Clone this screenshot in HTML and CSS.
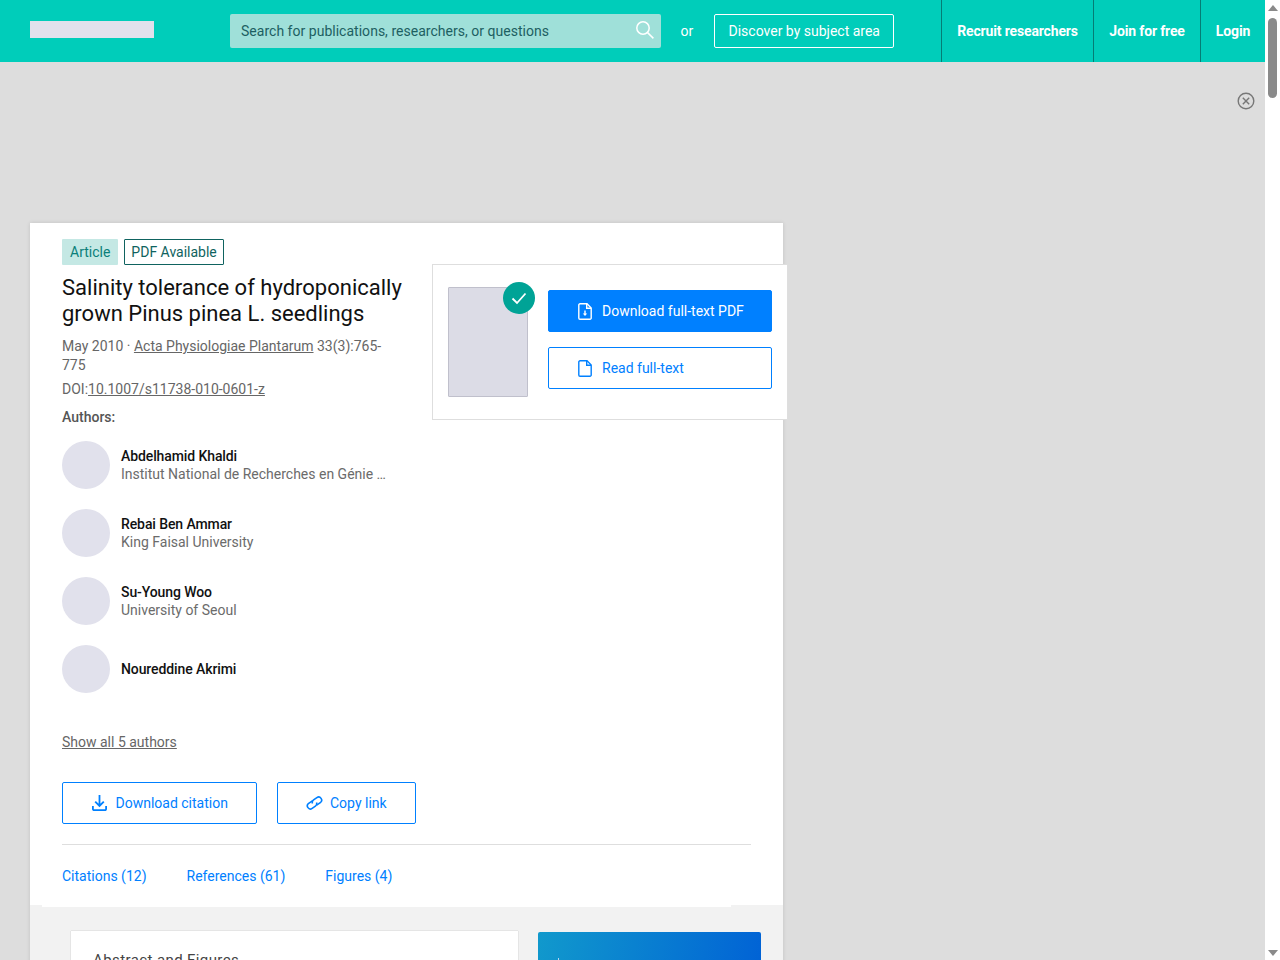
FILE: index.html
```html
<!DOCTYPE html>
<html lang="en">
<head>
  <meta charset="UTF-8" />
  <title>Salinity tolerance of hydroponically grown Pinus pinea L. seedlings</title>
  <link rel="stylesheet" href="styles.css">
</head>
<body>
  <div class="page">
    <header class="topbar">
      <div class="logo"></div>
      <div class="search">
        <span>Search for publications, researchers, or questions</span>
        <svg class="search-icon" width="20" height="20" viewBox="0 0 20 20" fill="none" stroke="#fff" stroke-width="1.5"><circle cx="8" cy="8" r="6.2"/><path d="M12.6 12.6 18.4 18.4"/></svg>
      </div>
      <span class="or">or</span>
      <a class="discover">Discover by subject area</a>
      <nav class="topnav">
        <a class="nav-recruit">Recruit researchers</a>
        <a class="nav-join">Join for free</a>
        <a class="nav-login">Login</a>
      </nav>
    </header>

    <div class="ad">
      <svg width="18" height="18" viewBox="0 0 18 18" fill="none" stroke="#777" stroke-width="1.4"><circle cx="9" cy="9" r="7.8"/><path d="M5.8 5.8 12.2 12.2M12.2 5.8 5.8 12.2"/></svg>
    </div>

    <main class="card">
      <div class="head">
        <div class="info">
          <div class="badges">
            <span class="badge badge-type">Article</span>
            <span class="badge badge-pdf">PDF Available</span>
          </div>
          <h1>Salinity tolerance of hydroponically grown Pinus pinea L. seedlings</h1>
          <p class="meta">May 2010 · <a>Acta Physiologiae Plantarum</a> 33(3):765-775</p>
          <p class="doi">DOI:<a>10.1007/s11738-010-0601-z</a></p>
          <h2>Authors:</h2>
          <ul class="authors">
            <li><div class="avatar"></div><div><strong>Abdelhamid Khaldi</strong><span>Institut National de Recherches en Génie …</span></div></li>
            <li><div class="avatar"></div><div><strong>Rebai Ben Ammar</strong><span>King Faisal University</span></div></li>
            <li><div class="avatar"></div><div><strong>Su-Young Woo</strong><span>University of Seoul</span></div></li>
            <li><div class="avatar"></div><div><strong>Noureddine Akrimi</strong></div></li>
          </ul>
          <a class="show-all">Show all 5 authors</a>
        </div>
        <aside class="fulltext">
          <div class="thumb">
            <div class="check">
              <svg width="18" height="18" viewBox="0 0 18 18" fill="none" stroke="#fff" stroke-width="1.8"><path d="M2.5 9.5 7 14 15.5 4.5"/></svg>
            </div>
          </div>
          <div class="fulltext-btns">
            <a class="btn btn-primary">
              <svg width="14" height="17" viewBox="0 0 14 17" fill="none" stroke="#fff" stroke-width="1.4"><path d="M1.7.8H9L13.2 5V15a1.2 1.2 0 0 1-1.2 1.2H2A1.2 1.2 0 0 1 .8 15V2A1.2 1.2 0 0 1 2 .8Z"/><path d="M8.7 1V5.2H13M7 7.5V12"/><path d="M4.8 10.5 7 13 9.2 10.5Z" fill="#fff" stroke="none"/></svg>
              Download full-text PDF
            </a>
            <a class="btn">
              <svg width="14" height="17" viewBox="0 0 14 17" fill="none" stroke="#0080ff" stroke-width="1.4"><path d="M1.7.8H9L13.2 5V15a1.2 1.2 0 0 1-1.2 1.2H2A1.2 1.2 0 0 1 .8 15V2A1.2 1.2 0 0 1 2 .8Z"/><path d="M8.7 1V5.2H13"/></svg>
              Read full-text
            </a>
          </div>
        </aside>
      </div>

      <div class="actions">
        <a class="btn btn-citation">
          <svg width="15" height="16" viewBox="0 0 15 16" fill="none" stroke="#0080ff" stroke-width="1.8"><path d="M7.5 0V10.5M3.2 6.6 7.5 11 11.8 6.6M.9 11V14a1.2 1.2 0 0 0 1.2 1.2H12.9a1.2 1.2 0 0 0 1.2-1.2V11"/></svg>
          Download citation
        </a>
        <a class="btn btn-copy">
          <svg width="17" height="14" viewBox="0 0 17 14" fill="none" stroke="#0080ff" stroke-width="1.6"><g transform="rotate(-35 8.5 7)"><path d="M8 4H3.5a3 3 0 0 0 0 6H7.5a3 3 0 0 0 2.9-2.2"/><path d="M9 10H13.5a3 3 0 0 0 0-6H9.5a3 3 0 0 0-2.9 2.2"/></g></svg>
          Copy link
        </a>
      </div>

      <nav class="tabs">
        <a>Citations (12)</a>
        <a>References (61)</a>
        <a>Figures (4)</a>
      </nav>

      <section class="lower">
        <div class="abstract">Abstract and Figures</div>
        <div class="promo"><i></i></div>
      </section>
    </main>
  </div>

  <div class="scrollbar">
    <div class="arrow-up"></div>
    <div class="thumb-bar"></div>
    <div class="arrow-down"></div>
  </div>
</body>
</html>
```

FILE: styles.css
```css
html, body {
  height: 100%;
}
body {
  margin: 0;
  height: 960px;
  overflow: hidden;
  display: flex;
  background: #fff;
  font-family: Roboto, "Liberation Sans", sans-serif;
  font-size: 14px;
  color: #111;
}
a {
  color: inherit;
}
.page {
  width: 1265px;
  height: 960px;
  overflow: hidden;
  background: #dddddd;
}

/* top bar */
.topbar {
  height: 62px;
  background: #00cdba;
  display: flex;
  align-items: center;
  padding-left: 30px;
  color: #fff;
}
.logo {
  width: 124px;
  height: 17px;
  background: #e1e1ec;
  margin: 0 76px 3px 0;
}
.search {
  width: 431px;
  height: 34px;
  box-sizing: border-box;
  background: #9fe0d9;
  border-radius: 2px;
  padding: 0 6px 0 11px;
  display: flex;
  align-items: center;
  justify-content: space-between;
  color: #1d5f62;
  letter-spacing: 0.02px;
}
.search-icon {
  margin-bottom: 3px;
}
.or {
  margin: 0 21px 0 19.5px;
}
.discover {
  width: 180px;
  height: 34px;
  box-sizing: border-box;
  border: 1px solid #fff;
  border-radius: 2px;
  display: flex;
  align-items: center;
  justify-content: center;
}
.topnav {
  margin-left: auto;
  height: 62px;
  display: flex;
  font-weight: 700;
  letter-spacing: -0.15px;
}
.topnav a {
  display: flex;
  align-items: center;
  justify-content: center;
  border-left: 1px solid #057d75;
}
.nav-recruit { width: 151px; }
.nav-join { width: 106px; }
.nav-login { width: 64px; }

.ad {
  height: 161px;
  box-sizing: border-box;
  padding: 30px 10px 0 0;
  display: flex;
  justify-content: flex-end;
  align-items: flex-start;
}

/* publication card */
.card {
  width: 753px;
  margin-left: 30px;
  background: #fff;
  box-shadow: 0 0 4px rgba(0, 0, 0, 0.12);
}
.head {
  display: flex;
  align-items: flex-start;
  padding: 16px 0 0 32px;
}
.info {
  width: 370px;
  flex: none;
}
.badges {
  display: flex;
  gap: 6px;
}
.badge {
  height: 26px;
  box-sizing: border-box;
  display: flex;
  align-items: center;
  border-radius: 1px;
  color: #0a7f7a;
}
.badge-type {
  padding: 0 8px;
  background: #c4e8e4;
}
.badge-pdf {
  padding: 0 6px;
  border: 1px solid #0f6360;
  color: #0f6360;
}
h1 {
  width: 345px;
  margin: 10px 0 0;
  font-size: 22px;
  line-height: 26px;
  font-weight: 400;
}
.meta, .doi {
  width: 335px;
  margin: 0;
  color: #666;
  line-height: 19px;
}
.meta a, .doi a {
  text-decoration: underline;
}
.meta {
  margin-top: 10px;
}
.doi {
  margin-top: 5px;
}
h2 {
  margin: 8px 0 0;
  font-size: 14px;
  line-height: 20px;
  font-weight: 500;
  color: #555;
}
.authors {
  list-style: none;
  margin: 14px 0 0;
  padding: 0;
  display: flex;
  flex-direction: column;
  gap: 20px;
}
.authors li {
  display: flex;
  align-items: center;
  gap: 11px;
}
.avatar {
  width: 48px;
  height: 48px;
  border-radius: 50%;
  background: #e1e1ec;
}
.authors strong {
  display: block;
  font-weight: 500;
  line-height: 18px;
  letter-spacing: -0.1px;
}
.authors span {
  display: block;
  color: #6b6b6b;
  line-height: 18px;
}
.show-all {
  display: block;
  margin-top: 40px;
  color: #666;
  line-height: 18px;
  text-decoration: underline;
}

.fulltext {
  flex: none;
  width: 356px;
  height: 156px;
  box-sizing: border-box;
  margin-top: 25px;
  background: #fff;
  border: 1px solid #dedede;
  position: relative;
  display: flex;
  padding: 22px 15px 0 15px;
  gap: 20px;
}
.thumb {
  width: 80px;
  height: 110px;
  box-sizing: border-box;
  background: #dcdce6;
  border: 1px solid #c0c0cc;
  border-radius: 1px;
  position: relative;
}
.check {
  position: absolute;
  top: -6px;
  right: -8px;
  width: 32px;
  height: 32px;
  border-radius: 50%;
  background: #00a396;
  display: flex;
  align-items: center;
  justify-content: center;
}
.fulltext-btns {
  width: 224px;
  padding-top: 3px;
  display: flex;
  flex-direction: column;
  gap: 15px;
}
.btn {
  height: 42px;
  box-sizing: border-box;
  border: 1px solid #0080ff;
  border-radius: 2px;
  color: #0080ff;
  display: flex;
  align-items: center;
  gap: 10px;
  padding-left: 29px;
  background: #fff;
}
.btn-primary {
  background: #0080ff;
  color: #fff;
}

.actions {
  display: flex;
  gap: 20px;
  margin: 31px 32px 0;
  padding-bottom: 20px;
  border-bottom: 1px solid #dedede;
}
.btn-citation {
  width: 195px;
  padding-left: 29px;
  gap: 8.5px;
}
.btn-copy {
  width: 139px;
  padding-left: 28px;
  gap: 7px;
}

.tabs {
  position: relative;
  z-index: 1;
  width: 669px;
  height: 62px;
  margin-left: 12px;
  padding-left: 20px;
  background: #fff;
  display: flex;
  align-items: center;
  gap: 40px;
  color: #0080ff;
}
.lower {
  margin-top: -2px;
  height: 120px;
  background: #f2f2f2;
  display: flex;
  align-items: flex-start;
  padding: 26px 22px 0 41px;
  gap: 20px;
}
.abstract {
  width: 447px;
  height: 100px;
  box-sizing: border-box;
  background: #fff;
  padding: 20px 22px;
  font-size: 15px;
  line-height: 18px;
  color: #444;
  letter-spacing: 0.4px;
  box-shadow: 0 0 1px rgba(0, 0, 0, 0.3);
}
.promo {
  width: 223px;
  height: 100px;
  border-radius: 2px;
  margin-top: 1px;
  background: linear-gradient(100deg, #1199cc, #0060d6);
  position: relative;
}
.promo i {
  position: absolute;
  left: 20px;
  top: 26px;
  width: 1px;
  height: 10px;
  background: #b9d6ee;
}

/* browser scrollbar */
.scrollbar {
  width: 15px;
  height: 960px;
  background: #fff;
  position: relative;
}
.arrow-up, .arrow-down {
  position: absolute;
  left: 3px;
  width: 0;
  height: 0;
  border-left: 5px solid transparent;
  border-right: 5px solid transparent;
}
.arrow-up {
  top: 5px;
  border-bottom: 6px solid #8a8a8a;
}
.arrow-down {
  bottom: 4px;
  border-top: 6px solid #8a8a8a;
}
.thumb-bar {
  position: absolute;
  left: 3px;
  top: 18px;
  width: 9px;
  height: 80px;
  border-radius: 5px;
  background: #8a8a8a;
}
```
